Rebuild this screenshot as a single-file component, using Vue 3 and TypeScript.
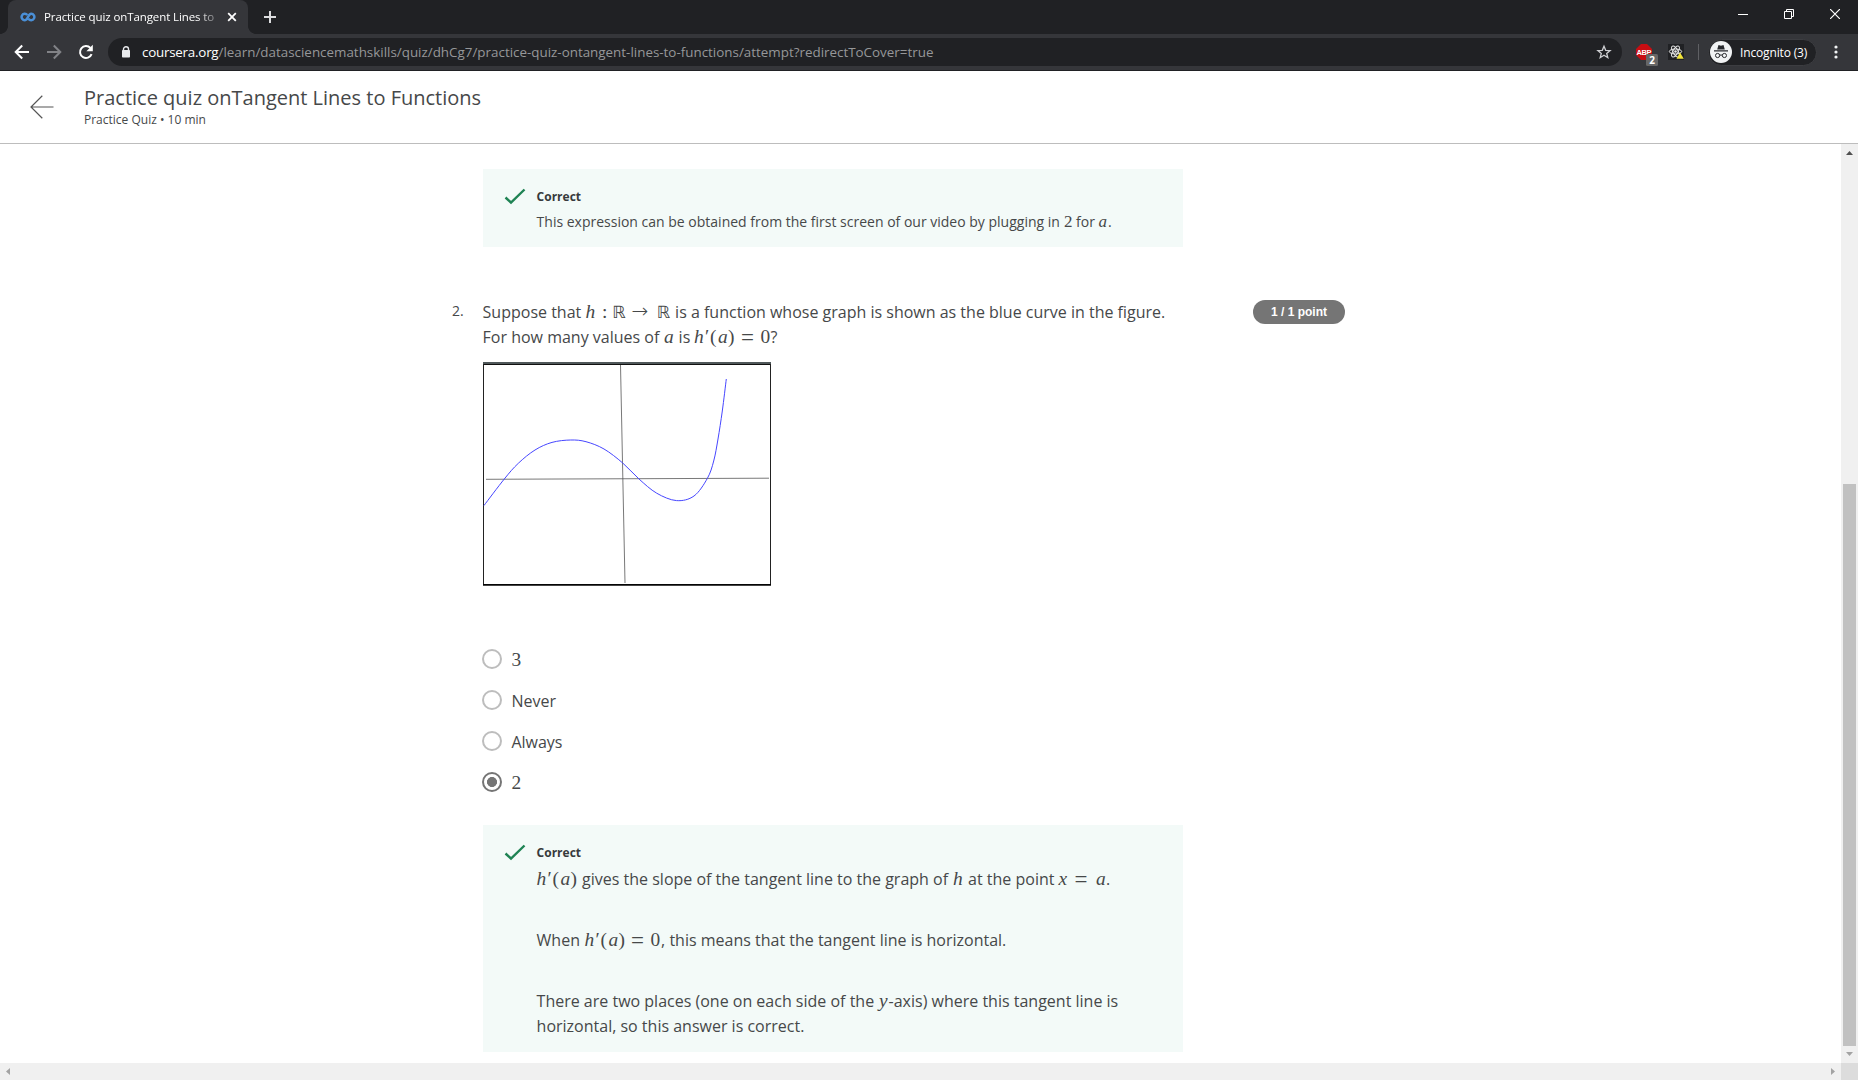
<script setup lang="ts">
type Kind = 'text' | 'var' | 'num' | 'op' | 'arrow' | 'set'
// [content, offset from the start of the line, kind]
type Run = [string, number, Kind]

const feedbackOne: Run[] = [
  ['This expression can be obtained from the first screen of our video by plugging in', 0, 'text'],
  ['2', 527.5, 'num'], ['for', 539.5, 'text'], ['a', 562, 'var'], ['.', 571.5, 'text'],
]
const prompt: Run[][] = [
  [
    ['Suppose that', 0, 'text'], ['h', 103, 'var'], [':', 119.5, 'num'], ['ℝ', 129.5, 'set'],
    ['→', 149, 'arrow'], ['ℝ', 174, 'set'],
    ['is a function whose graph is shown as the blue curve in the figure.', 192.5, 'text'],
  ],
  [
    ['For how many values of', 0, 'text'], ['a', 181.5, 'var'], ['is', 196, 'text'], ['h', 211.5, 'var'],
    ['′', 222.5, 'num'], ['(', 227.5, 'num'], ['a', 235.5, 'var'], [')', 245.5, 'num'], ['=', 258.5, 'op'],
    ['0', 278, 'num'], ['?', 288, 'text'],
  ],
]
const feedbackTwo: Run[][] = [
  [
    ['h', 0, 'var'], ['′', 11, 'num'], ['(', 16, 'num'], ['a', 24, 'var'], [')', 34, 'num'],
    ['gives the slope of the tangent line to the graph of', 45.5, 'text'], ['h', 416.5, 'var'],
    ['at the point', 431.5, 'text'], ['x', 522, 'var'], ['=', 538, 'op'], ['a', 559.5, 'var'], ['.', 569.5, 'text'],
  ],
  [
    ['When', 0, 'text'], ['h', 48, 'var'], ['′', 59, 'num'], ['(', 64, 'num'], ['a', 72, 'var'],
    [')', 82, 'num'], ['=', 94.5, 'op'], ['0', 114, 'num'],
    [', this means that the tangent line is horizontal.', 124.5, 'text'],
  ],
  [
    ['There are two places (one on each side of the', 0, 'text'], ['y', 342.5, 'var'],
    ['-axis) where this tangent line is', 352, 'text'],
  ],
  [['horizontal, so this answer is correct.', 0, 'text']],
]
const options = [
  { label: '3', math: true, chosen: false },
  { label: 'Never', math: false, chosen: false },
  { label: 'Always', math: false, chosen: false },
  { label: '2', math: true, chosen: true },
]

function box(line: Run[], i: number) {
  return i < line.length - 1 ? { width: line[i + 1][1] - line[i][1] + 'px' } : {}
}

// Sampled values of h, joined by a Catmull-Rom spline.
const samples: [number, number][] = [
  [1, 143.5], [21.3, 117], [35.3, 101.3], [52, 88], [69, 80.4], [87.7, 78], [103, 79.7], [121, 87], [139.7, 101],
  [156, 117], [173.7, 131.2], [193.5, 138.6], [211, 134], [224.3, 116.5], [230.7, 99], [235, 77], [239.3, 49], [243.3, 17],
]
const curve = samples.slice(1).reduce((d, p, i) => {
  const a = samples[i]
  const before = samples[Math.max(i - 1, 0)]
  const after = samples[Math.min(i + 2, samples.length - 1)]
  const c1 = [a[0] + (p[0] - before[0]) / 6, a[1] + (p[1] - before[1]) / 6]
  const c2 = [p[0] - (after[0] - a[0]) / 6, p[1] - (after[1] - a[1]) / 6]
  return `${d}C${c1} ${c2} ${p}`
}, `M${samples[0]}`)
</script>

<template>
  <div class="window">
    <div class="tabstrip">
      <div class="tab">
        <svg class="favicon" width="16" height="16" viewBox="0 0 16 16">
          <path d="M7.300 6A3.200 3.200 0 1 0 5 11.200C8.200 11.200 7.800 4.800 11.200 4.800a3.200 3.200 0 1 1-2.700 5" fill="none" stroke="#4a8fd6" stroke-width="2.500" />
        </svg>
        <span class="tab-title">Practice quiz onTangent Lines to</span>
        <svg class="tab-close" width="10" height="10" viewBox="0 0 10 10"><path d="M1.200 1.200l7.600 7.600M8.800 1.200l-7.600 7.600" stroke="#fff" stroke-width="1.800" /></svg>
      </div>
      <svg class="new-tab" width="12" height="12" viewBox="0 0 12 12"><path d="M6 0v12M0 6h12" stroke="#dcdddf" stroke-width="2" /></svg>
      <div class="controls">
        <svg width="10" height="10" viewBox="0 0 10 10"><path d="M0 5.500h10" stroke="#fff" /></svg>
        <svg width="10" height="10" viewBox="0 0 10 10"><path d="M.5 2.500h7v7h-7zM2.500 2.500v-2h7v7h-2" fill="none" stroke="#fff" /></svg>
        <svg width="10" height="10" viewBox="0 0 10 10"><path d="M0 0l10 10M10 0L0 10" stroke="#fff" stroke-width="1.200" /></svg>
      </div>
    </div>

    <div class="toolbar">
      <svg class="nav back" width="16" height="16" viewBox="0 0 16 16"><path d="M15 8H2M8.200 1.500L1.700 8l6.500 6.500" fill="none" stroke="#fff" stroke-width="2" /></svg>
      <svg class="nav forward" width="16" height="16" viewBox="0 0 16 16"><path d="M1 8h13M7.800 1.500L14.300 8l-6.500 6.500" fill="none" stroke="#828387" stroke-width="2" /></svg>
      <svg class="nav reload" width="16" height="16" viewBox="0 0 16 16"><path d="M13.600 10.200A6 6 0 1 1 12.400 3.900" fill="none" stroke="#fff" stroke-width="2" /><path d="M14.800.8v6.400H8.400z" fill="#fff" /></svg>
      <div class="omnibox">
        <svg class="lock" width="10" height="12" viewBox="0 0 10 12"><path d="M2.500 5V3a2.500 2.200 0 0 1 5 0v2" fill="none" stroke="#e8eaed" stroke-width="1.400" /><rect x="1" y="4" width="8" height="7.500" rx=".8" fill="#e8eaed" /></svg>
        <span class="host">coursera.org</span><span class="path">/learn/datasciencemathskills/quiz/dhCg7/practice-quiz-ontangent-lines-to-functions/attempt?redirectToCover=true</span>
        <svg class="star" width="16" height="16" viewBox="0 0 16 16"><path d="M8 2.200l1.700 4.100 4.400.3-3.400 2.800 1.100 4.300L8 11.300l-3.800 2.400 1.100-4.300L1.900 6.600l4.400-.3z" fill="none" stroke="#cfd0d3" stroke-width="1.300" /></svg>
      </div>
      <svg class="abp" width="24" height="24" viewBox="0 0 24 24">
        <path d="M6 2h6l5 5v6l-5 5H6l-5-5V7z" fill="#c70d12" />
        <text x="1.600" y="12.800" font-family="Liberation Sans" font-weight="700" font-size="7.500" fill="#fff" textLength="14.800">ABP</text>
        <rect x="11" y="12" width="12" height="12" rx="1.500" fill="#666" />
        <text x="17" y="21.600" font-family="Open Sans" font-weight="700" font-size="10" fill="#fff" text-anchor="middle">2</text>
      </svg>
      <svg class="react" width="16" height="16" viewBox="0 0 16 16">
        <rect width="16" height="16" fill="#202124" />
        <g fill="none" stroke="#e6e6e6" stroke-width="1"><ellipse cx="7.500" cy="7.500" rx="6.200" ry="2.500" /><ellipse cx="7.500" cy="7.500" rx="6.200" ry="2.500" transform="rotate(60 7.500 7.500)" /><ellipse cx="7.500" cy="7.500" rx="6.200" ry="2.500" transform="rotate(120 7.500 7.500)" /></g>
        <circle cx="7.500" cy="7.500" r="1.300" fill="#e6e6e6" />
        <path d="M12 8.500l3.800 6.300H8.500z" fill="#f3e53a" />
      </svg>
      <i class="divider"></i>
      <div class="incognito">
        <svg width="22" height="22" viewBox="0 0 22 22"><circle cx="11" cy="11" r="11" fill="#f1f3f4" /><path d="M7.200 8.500l1.300-4.400 2.500.7 2.500-.7 1.300 4.400zM4 9.300h14v1.300H4z" fill="#27292d" /><path d="M9.700 14.300q1.300-.8 2.600 0" fill="none" stroke="#27292d" /><circle cx="7.600" cy="14.500" r="2.100" fill="none" stroke="#27292d" /><circle cx="14.400" cy="14.500" r="2.100" fill="none" stroke="#27292d" /></svg>
        <span>Incognito (3)</span>
      </div>
      <svg class="menu" width="4" height="14" viewBox="0 0 4 14"><circle cx="2" cy="2" r="1.600" fill="#f1f3f4" /><circle cx="2" cy="7" r="1.600" fill="#f1f3f4" /><circle cx="2" cy="12" r="1.600" fill="#f1f3f4" /></svg>
    </div>

    <header class="header">
      <svg width="24" height="24" viewBox="0 0 24 24"><path d="M23.500 12H1M12.300 .8L1 12l11.300 11.200" fill="none" stroke="#555" stroke-width="1.200" /></svg>
      <div>
        <h1>Practice quiz onTangent Lines to Functions</h1>
        <p>Practice Quiz • 10 min</p>
      </div>
    </header>

    <div class="viewport">
      <main class="content">
        <section class="feedback first">
          <svg class="check" width="22" height="18" viewBox="0 0 22 18"><path d="M1.500 9.500l5.500 5L20.500 1.500" fill="none" stroke="#1f8354" stroke-width="2.400" /></svg>
          <div>
            <h2>Correct</h2>
            <div class="line small"><span v-for="(r, i) in feedbackOne" :key="i" class="run" :class="r[2]" :style="box(feedbackOne, i)">{{ r[0] }}</span></div>
          </div>
        </section>

        <section class="question">
          <span class="number">2.</span>
          <div class="body">
            <div v-for="(l, n) in prompt" :key="n" class="line"><span v-for="(r, i) in l" :key="i" class="run" :class="r[2]" :style="box(l, i)">{{ r[0] }}</span></div>
            <svg class="graph" width="288" height="224" viewBox="0 0 288 224">
              <rect width="288" height="224" fill="#fff" />
              <path d="M0 1h288" stroke="#50585a" stroke-width="2" />
              <path d="M0 2.500h288" stroke="#111" />
              <path d="M.5 2v222M287.500 2v222" stroke="#222" />
              <path d="M0 222.500h288" stroke="#050505" />
              <path d="M0 223.500h288" stroke="#444" />
              <path d="M137.500 3L142 221M3 117.300l283-1.100" fill="none" stroke="#555" stroke-width=".8" />
              <path :d="curve" fill="none" stroke="#4646ff" stroke-width="1" />
            </svg>
            <ul class="options">
              <li v-for="o in options" :key="o.label"><i class="radio" :class="{ chosen: o.chosen }"></i><span :class="o.math ? 'num' : 'text'">{{ o.label }}</span></li>
            </ul>
            <section class="feedback second">
              <svg class="check" width="22" height="18" viewBox="0 0 22 18"><path d="M1.500 9.500l5.500 5L20.500 1.500" fill="none" stroke="#1f8354" stroke-width="2.400" /></svg>
              <div>
                <h2>Correct</h2>
                <div v-for="(l, n) in feedbackTwo" :key="n" class="line"><span v-for="(r, i) in l" :key="i" class="run" :class="r[2]" :style="box(l, i)">{{ r[0] }}</span></div>
              </div>
            </section>
          </div>
          <span class="points">1 / 1 point</span>
        </section>
      </main>
      <div class="vbar">
        <svg width="17" height="17" viewBox="0 0 17 17"><path d="M5 11l3.500-4 3.500 4z" fill="#505050" /></svg>
        <i class="thumb"></i>
        <svg width="17" height="17" viewBox="0 0 17 17"><path d="M5 6l3.500 4L12 6z" fill="#a3a3a3" /></svg>
      </div>
    </div>
    <div class="hbar">
      <svg width="17" height="17" viewBox="0 0 17 17"><path d="M10 5L6 8.500l4 3.500z" fill="#a3a3a3" /></svg>
      <svg width="17" height="17" viewBox="0 0 17 17"><path d="M7 5l4 3.500L7 12z" fill="#a3a3a3" /></svg>
      <i class="corner"></i>
    </div>
  </div>
</template>

<style scoped>
.window { width: 1858px; height: 1080px; display: flex; flex-direction: column; overflow: hidden; background: #fff; color: #464849; font-family: 'Open Sans', sans-serif; }
svg { display: block; flex: none; }
h1, h2, p, ul { margin: 0; padding: 0; }
span { white-space: pre; }

.tabstrip { height: 34px; flex: none; display: flex; align-items: flex-start; background: #202124; padding-left: 8px; }
.tab { position: relative; width: 240px; height: 34px; box-sizing: border-box; display: flex; align-items: center; background: #35363a; border-radius: 8px 8px 0 0; padding: 0 0 0 12px; }
.tab::before, .tab::after { content: ''; position: absolute; bottom: 0; width: 8px; height: 8px; }
.tab::before { left: -8px; background: radial-gradient(circle at 0 0, #202124 7.600px, #35363a 8.200px); }
.tab::after { right: -8px; background: radial-gradient(circle at 100% 0, #202124 7.600px, #35363a 8.200px); }
.tab-title { width: 176px; margin: 0 0 1px 8px; font-size: 11.500px; letter-spacing: -0.1px; color: #fff; -webkit-mask-image: linear-gradient(90deg, #000 153px, transparent 180px); mask-image: linear-gradient(90deg, #000 153px, transparent 180px); }
.tab-close { margin-left: 7px; }
.new-tab { margin: 11px 0 0 16px; }
.controls { display: flex; gap: 36px; margin: 9px 18px 0 auto; }

.toolbar { height: 37px; flex: none; box-sizing: border-box; display: flex; align-items: center; background: #35363a; border-bottom: 1px solid #202124; padding-left: 14px; }
.forward { margin-left: 16px; }
.reload { margin-left: 16px; }
.omnibox { width: 1514px; height: 28px; margin-left: 14px; border-radius: 14px; background: #202124; display: flex; align-items: center; box-sizing: border-box; padding: 0 10px 0 13px; font-size: 13.400px; }
.host { color: #fff; width: 76.500px; margin-left: 11px; letter-spacing: -0.24px; }
.path { color: #969799; }
.star { margin-left: auto; }
.abp { margin: 4px 0 0 13px; }
.react { margin-left: 9px; }
.divider { width: 1px; height: 16px; margin-left: 14px; background: #5f6064; }
.incognito { width: 109px; height: 27px; margin-left: 9px; box-sizing: border-box; display: flex; align-items: center; border: 1px solid #3c3d41; border-radius: 14px; background: #202124; padding-left: 1px; color: #fff; font-size: 12px; }
.incognito span { margin-left: 8px; letter-spacing: -0.15px; }
.menu { margin-left: 17px; }

.header { height: 73px; flex: none; box-sizing: border-box; display: flex; border-bottom: 1px solid #bdbdbd; padding-left: 30px; }
.header svg { margin-top: 24px; }
.header div { margin-left: 30px; padding-top: 13px; }
.header h1 { font-size: 20px; font-weight: 400; line-height: 28px; }
.header p { font-size: 12px; line-height: 16px; }

.viewport { flex: 1; display: flex; min-height: 0; }
.content { flex: 1; padding: 25px 0 0 452px; overflow: hidden; }
.feedback { width: 700px; box-sizing: border-box; display: flex; background: #f3faf8; padding: 19px 0 0 21px; }
.feedback > div { margin-left: 10.600px; }
.feedback h2 { font-size: 12px; line-height: 18px; font-weight: 700; color: #373a3c; }
.first { height: 78px; margin-left: 31px; }
.second { height: 227px; margin: 33px 0 0 .4px; }
.second h2 { margin-bottom: 5px; }
.second .line { margin-bottom: 36px; }
.second .line:nth-of-type(3) { margin-bottom: 0; }

.line { height: 25px; line-height: 25px; font-size: 16px; display: flex; align-items: baseline; }
.run { flex: none; }
.var, .num, .op, .arrow, .set { font-family: 'Liberation Serif', serif; font-size: 19.400px; line-height: 16px; }
.var { font-style: italic; }
.op { font-size: 23px; position: relative; top: 2px; }
.arrow { font-family: 'DejaVu Sans', sans-serif; font-weight: 200; font-size: 20px; }
.set { font-family: 'DejaVu Sans', sans-serif; font-size: 17px; }
.small { font-size: 14px; padding-top: 3px; }
.small .var, .small .num { font-size: 17px; }

.question { display: flex; margin-top: 52px; }
.number { width: 30.600px; font-size: 14px; line-height: 24px; }
.body { width: 700px; padding-top: 1px; margin-right: .4px; }
.graph { margin: 12px 0 0 .4px; }
.options { list-style: none; margin-top: 63px; }
.options li { height: 20px; margin-bottom: 21px; display: flex; align-items: center; font-size: 16px; }
.options li:last-child { margin-bottom: 0; }
.options .text, .options .num { padding-top: 2px; }
.radio { width: 20px; height: 20px; box-sizing: border-box; border: 2px solid #bdbdbd; border-radius: 50%; margin: 0 9.400px 0 -.6px; }
.chosen { border-color: #757575; background: radial-gradient(circle, #757575 4.700px, #fff 5.300px); }
.points { width: 92px; height: 24px; margin: 1px 0 0 70px; border-radius: 12px; background: #757575; color: #fff; font: 700 12px/24px 'Liberation Sans', sans-serif; text-align: center; }

.vbar { width: 17px; background: #f0f0f0; display: flex; flex-direction: column; }
.thumb { width: 13px; height: 562px; margin: auto 2px 0; background: #c1c1c1; }
.hbar { height: 17px; flex: none; display: flex; justify-content: space-between; background: #f0f0f0; }
.hbar svg:nth-child(2) { margin-left: auto; }
.corner { width: 17px; background: #dcdcdc; }
</style>

<style>
body { background: #fff; overflow: hidden; }
</style>
